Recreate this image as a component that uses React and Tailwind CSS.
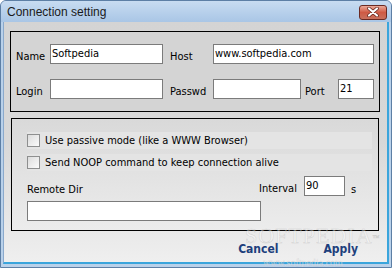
import React from "react";

const font = { fontFamily: '"DejaVu Sans Condensed", "DejaVu Sans", sans-serif' };

function Field({ w, value, className = "" }) {
  return (
    <div
      className={`h-[20px] bg-white border border-[#7b7b7b] pl-[1px] pt-[2px] text-[11px] leading-[13px] text-black ${className}`}
      style={{ width: w }}
    >
      {value}
    </div>
  );
}

function Check({ label }) {
  return (
    <div className="h-[17px] w-[345px] bg-[#e4e4e4] flex items-center">
      <div className="w-[13px] h-[13px] border border-[#8e8f8f] bg-gradient-to-br from-[#dcdcdc] to-[#fbfbfb] shrink-0" />
      <span className="ml-[5px] text-[11px] leading-[13px] text-black">{label}</span>
    </div>
  );
}

export default function App() {
  return (
    <div
      className="relative w-[392px] h-[268px] overflow-hidden bg-[#a9c6e6] border border-[#5d7fa5] rounded-t-[6px] flex flex-col"
      style={font}
    >
      {/* title bar */}
      <div className="h-[21px] shrink-0 flex items-center bg-gradient-to-b from-[#c8dcf1] to-[#a9c6e6] pl-[6px] pr-[4px]">
        <span
          className="text-[12px] text-[#1a1a1a] leading-[14px] mt-[1px]"
          style={{ fontFamily: '"Liberation Sans", sans-serif' }}
        >
          Connection setting
        </span>
        <div className="ml-auto mt-[1px] w-[28px] h-[15px] rounded-[3px] border border-[#6b2a22] bg-gradient-to-b from-[#eaa898] via-[#cf5a44] to-[#c8705c] flex items-center justify-center">
          <svg width="12" height="10" viewBox="0 0 12 10">
            <path d="M2 1.5 L10 8.5 M10 1.5 L2 8.5" stroke="#5b2018" strokeWidth="3.6" strokeLinecap="round" />
            <path d="M2 1.5 L10 8.5 M10 1.5 L2 8.5" stroke="#ffffff" strokeWidth="2.2" strokeLinecap="round" />
          </svg>
        </div>
      </div>

      {/* body frame */}
      <div className="flex-1 flex flex-col pl-[2px] pr-[2px] pb-[3px] bg-[#b9d1ea]">
        <div className="flex-1 flex flex-col bg-gradient-to-b from-[#d4d4d4] via-[#d8d8d8] to-[#efefef] border-l border-[#8aa9cc] border-b-2 border-b-[#3aa5dc] border-r-2 border-r-[#3aa5dc]">
          {/* panel 1 */}
          <div className="mt-[9px] ml-[6px] w-[370px] h-[81px] border border-black bg-[#d4d4d4] pt-[12px] pl-[5px] flex flex-col gap-[15px]">
            <div className="flex items-start h-[20px]">
              <span className="w-[34px] mt-[6px] text-[11px] leading-[13px]">Name</span>
              <Field w={113} value="Softpedia" />
              <span className="ml-[7px] w-[43px] mt-[6px] text-[11px] leading-[13px]">Host</span>
              <Field w={161} value="www.softpedia.com" />
            </div>
            <div className="flex items-start h-[20px]">
              <span className="w-[34px] mt-[6px] text-[11px] leading-[13px]">Login</span>
              <Field w={113} value="" />
              <span className="ml-[7px] w-[43px] mt-[6px] text-[11px] leading-[13px]">Passwd</span>
              <Field w={88} value="" />
              <span className="ml-[4px] w-[33px] mt-[6px] text-[11px] leading-[13px]">Port</span>
              <Field w={36} value="21" />
            </div>
          </div>

          {/* panel 2 */}
          <div className="mt-[6px] ml-[7px] w-[368px] h-[113px] border border-black bg-gradient-to-b from-[#d9d9d9] to-[#ececec] pt-[13px] pl-[15px] flex flex-col">
            <Check label="Use passive mode (like a WWW Browser)" />
            <div className="mt-[5px]">
              <Check label="Send NOOP command to keep connection alive" />
            </div>
            <div className="mt-[5px] flex items-start">
              <div className="w-[232px] flex flex-col">
                <span className="pt-[7px] text-[11px] leading-[13px]">Remote Dir</span>
                <Field w={234} value="" className="mt-[5px]" />
              </div>
              <span className="w-[45px] mt-[6px] text-[11px] leading-[13px]">Interval</span>
              <Field w={41} value="90" />
              <span className="ml-[6px] mt-[7px] text-[11px] leading-[13px]">s</span>
            </div>
          </div>

          {/* footer */}
          <div className="relative flex-1 flex items-center justify-end pr-[29px] pt-[5px]">
            <span className="text-[12px] font-bold text-[#1d3f7c] leading-[14px]">Cancel</span>
            <span className="ml-[45px] text-[12px] font-bold text-[#1d3f7c] leading-[14px]">Apply</span>
          </div>
        </div>
      </div>

      {/* watermark */}
      <div
        className="absolute left-[244px] top-[224px] text-[22px] tracking-[1px] text-white/40 leading-none pointer-events-none"
        style={{ fontFamily: '"Liberation Serif", serif', WebkitTextStroke: "0.5px rgba(150,150,150,0.35)" }}
      >
        SOFTPEDIA<sup className="text-[7px]">™</sup>
      </div>
      <div
        className="absolute left-[262px] top-[257px] text-[10px] text-white/50 leading-none pointer-events-none"
        style={{ fontFamily: '"Liberation Serif", serif', WebkitTextStroke: "0.3px rgba(150,150,150,0.35)" }}
      >
        www.softpedia.com
      </div>
    </div>
  );
}
